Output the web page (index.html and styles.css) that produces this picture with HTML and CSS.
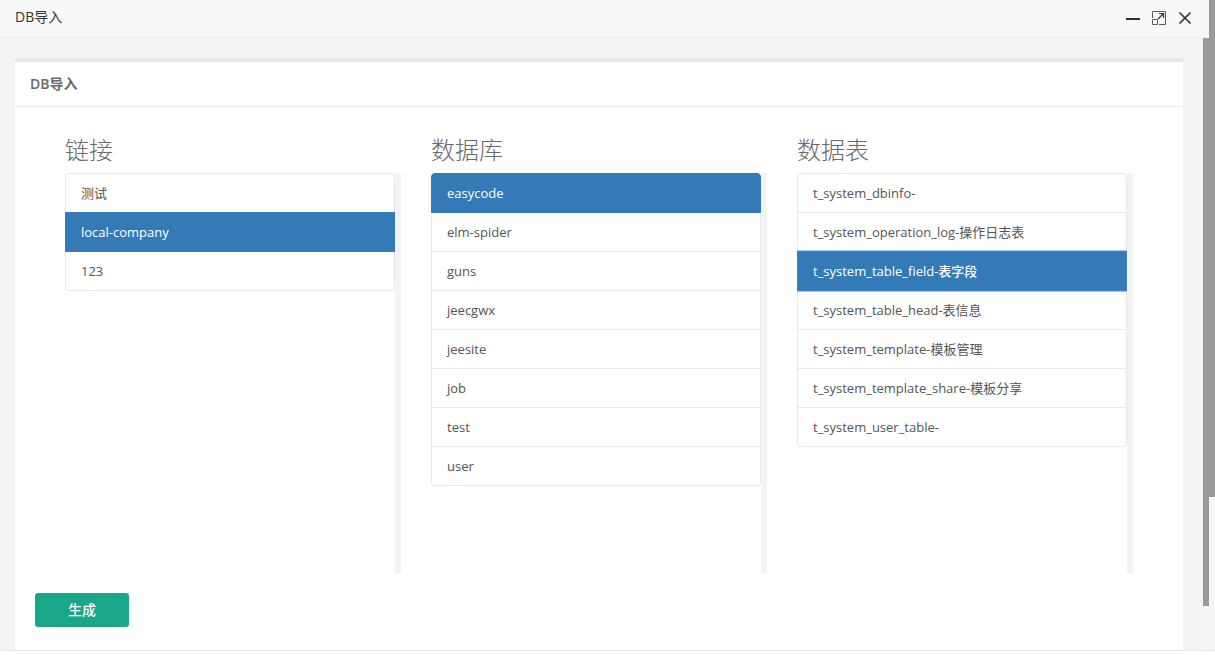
FILE: index.html
```html
<!DOCTYPE html>
<html lang="zh-CN">
<head>
<meta charset="utf-8">
<title>DB导入</title>
<link rel="stylesheet" href="styles.css">
</head>
<body>
<div class="page">
  <section class="dialog">
    <header class="dialog-header">
      <span class="dialog-title">DB导入</span>
      <div class="dialog-actions">
        <button type="button" class="icon-button" aria-label="最小化">
          <svg width="14" height="14" viewBox="0 0 14 14"><path d="M0 8h14" stroke="#2e2d3c" stroke-width="2"/></svg>
        </button>
        <button type="button" class="icon-button" aria-label="最大化">
          <svg width="14" height="14" viewBox="0 0 14 14" fill="none" stroke="#5a5a64"><path d="M.5 7V.5h13v13H7M.5 8.500h5v5h-5z"/><path d="M6 8l5.500-5.500M7 2.500h4.500V7" stroke="#2e2d3c" stroke-width="1.200"/></svg>
        </button>
        <button type="button" class="icon-button" aria-label="关闭">
          <svg width="14" height="14" viewBox="0 0 14 14"><path d="M1.500 1.500l11 11M12.500 1.500l-11 11" stroke="#2e2d3c" stroke-width="1.600"/></svg>
        </button>
      </div>
    </header>
    <div class="dialog-body">
      <main class="content">
        <div class="card">
          <h5 class="card-title">DB导入</h5>
          <div class="card-body">
            <div class="columns">
              <section class="column">
                <h2 class="column-title">链接</h2>
                <div class="scroller">
                  <ul class="list">
                    <li><button type="button" class="item">测试</button></li>
                    <li><button type="button" class="item active">local-company</button></li>
                    <li><button type="button" class="item">123</button></li>
                  </ul>
                </div>
              </section>
              <section class="column">
                <h2 class="column-title">数据库</h2>
                <div class="scroller">
                  <ul class="list">
                    <li><button type="button" class="item active">easycode</button></li>
                    <li><button type="button" class="item">elm-spider</button></li>
                    <li><button type="button" class="item">guns</button></li>
                    <li><button type="button" class="item">jeecgwx</button></li>
                    <li><button type="button" class="item">jeesite</button></li>
                    <li><button type="button" class="item">job</button></li>
                    <li><button type="button" class="item">test</button></li>
                    <li><button type="button" class="item">user</button></li>
                  </ul>
                </div>
              </section>
              <section class="column">
                <h2 class="column-title">数据表</h2>
                <div class="scroller">
                  <ul class="list">
                    <li><button type="button" class="item">t_system_dbinfo-</button></li>
                    <li><button type="button" class="item">t_system_operation_log-操作日志表</button></li>
                    <li><button type="button" class="item active focused">t_system_table_field-表字段</button></li>
                    <li><button type="button" class="item">t_system_table_head-表信息</button></li>
                    <li><button type="button" class="item">t_system_template-模板管理</button></li>
                    <li><button type="button" class="item">t_system_template_share-模板分享</button></li>
                    <li><button type="button" class="item">t_system_user_table-</button></li>
                  </ul>
                </div>
              </section>
            </div>
            <button type="button" class="primary">生成</button>
          </div>
        </div>
      </main>
      <div class="track inner-track"><div class="thumb"></div></div>
    </div>
  </section>
  <div class="track outer-track"><div class="thumb"></div></div>
</div>
</body>
</html>
```
FILE: styles.css
```css
* {
  box-sizing: border-box;
}

body {
  margin: 0;
  background: #fff;
  color: #676a6c;
  font-family: "Open Sans", "Noto Sans CJK SC", sans-serif;
  font-size: 13px;
  line-height: 18px;
}

button {
  font: inherit;
  cursor: pointer;
}

.page {
  display: flex;
  height: calc(100vh - 4px);
  border-bottom: 1px solid #e7eaec;
}

.dialog {
  display: flex;
  flex: 1;
  flex-direction: column;
  min-width: 0;
}

.dialog-header {
  display: flex;
  align-items: flex-start;
  justify-content: space-between;
  height: 38px;
  padding: 7px 17px 0 15px;
  border-bottom: 1px solid #eee;
  background: #f8f8f8;
}

.dialog-title {
  color: #333;
  font-size: 14px;
  line-height: 20px;
}

.dialog-actions {
  display: flex;
  gap: 12px;
  padding-top: 4px;
}

.icon-button {
  display: flex;
  padding: 0;
  border: 0;
  background: none;
}

.dialog-body {
  display: flex;
  flex: 1;
  min-height: 0;
}

.content {
  flex: 1;
  min-width: 0;
  padding: 20px 20px 0 15px;
  overflow: hidden;
  background: #f3f3f4;
}

.card {
  min-height: 100%;
  border-top: 4px solid #e7eaec;
  background: #fff;
}

.card-title {
  margin: 0;
  padding: 13px 15px;
  border-bottom: 1px solid #e7eaec;
  font-size: 14px;
  font-weight: 600;
}

.card-body {
  padding: 25px 20px 24px;
}

.columns {
  display: grid;
  grid-template-columns: repeat(3, minmax(0, 1fr));
  gap: 30px;
  padding: 0 30px 20px;
}

.column-title {
  margin: 0 0 5px;
  font-size: 24px;
  font-weight: 300;
  line-height: 36px;
}

.scroller {
  height: 400px;
  overflow: hidden;
  border-right: 6px solid #f3f3f4;
}

.list {
  margin: 0;
  padding: 0;
  list-style: none;
}

.list li + li {
  margin-top: -1px;
}

.item {
  display: block;
  width: 100%;
  padding: 10px 15px;
  border: 1px solid #e7eaec;
  background: #fff;
  color: #555;
  text-align: left;
}

.list li:first-child .item {
  border-radius: 4px 4px 0 0;
}

.list li:last-child .item {
  border-radius: 0 0 4px 4px;
}

.item.active {
  position: relative;
  z-index: 1;
  border-color: #337ab7;
  background: #337ab7;
  color: #fff;
  font-weight: 500;
}

.item.focused {
  border-color: #3b80d9;
  box-shadow: 0 0 0 1px #a3c6f8;
}

.primary {
  display: block;
  padding: 8px 33px;
  border: 0;
  border-radius: 3px;
  background: #1aa688;
  color: #fff;
  font-size: 14px;
  font-weight: 500;
}

.track {
  width: 6px;
  background: #f5f5f5;
}

.thumb {
  background: #999;
}

.inner-track .thumb {
  height: 92.8%;
}

.outer-track .thumb {
  height: 76.5%;
}
```
